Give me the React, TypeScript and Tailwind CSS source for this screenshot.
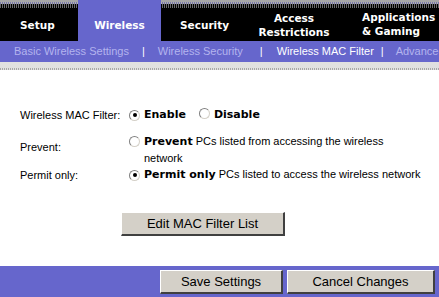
import React from "react";

const SANS = "font-['Liberation_Sans',Arial,sans-serif]";
const BOLD = "font-['DejaVu_Sans',Verdana,sans-serif] font-bold";

function Radio({ checked }: { checked?: boolean }) {
  return (
    <span className="relative inline-flex h-[11px] w-[11px] shrink-0 items-center justify-center rounded-full border border-t-[#808080] border-l-[#808080] border-r-[#d4d0c8] border-b-[#d4d0c8] bg-white">
      {checked && <span className="h-[4px] w-[4px] rounded-full bg-black" />}
    </span>
  );
}

function ClassicButton({ label, className }: { label: string; className: string }) {
  return (
    <button
      className={`${SANS} ${className} flex items-center justify-center border-t border-l border-t-white border-l-white border-r-2 border-b-2 border-r-[#404040] border-b-[#404040] bg-[#d4d0c8] text-[13px] text-black`}
    >
      {label}
    </button>
  );
}

function Tab({ children, className, active }: { children: React.ReactNode; className: string; active?: boolean }) {
  return (
    <div
      className={`${BOLD} ${className} flex flex-col justify-center text-[10.5px] leading-[14px] ${
        active ? "bg-[#6666cc] text-white" : "text-white"
      }`}
    >
      {children}
    </div>
  );
}

export default function App() {
  return (
    <div className="flex h-[297px] w-[439px] flex-col overflow-hidden bg-white">
      {/* top tabs */}
      <div className="relative flex h-[41px] shrink-0 bg-black">
        <div className="absolute left-0 top-0 h-[8px] w-full bg-[#a8a8a8]">
          <div className="mt-[2px] h-[2px] w-full bg-[repeating-linear-gradient(90deg,#7878a8_0_1px,#b0b0b0_1px_2px)]" />
          <div className="h-[4px] w-full bg-[repeating-linear-gradient(90deg,#6a6a6a_0_1px,#000_1px_2px)]" />
        </div>
        <Tab className="relative w-[78px] pl-[20px] pt-[9px]">Setup</Tab>
        <Tab className="relative w-[83px] items-center pt-[9px]" active>
          Wireless
        </Tab>
        <Tab className="relative w-[89px] pl-[19px] pt-[9px]">Security</Tab>
        <Tab className="relative w-[88px] items-center pt-[8px]">
          <span>Access</span>
          <span>Restrictions</span>
        </Tab>
        <Tab className="relative w-[101px] pl-[24px] pt-[6px]">
          <span>Applications</span>
          <span>&amp; Gaming</span>
        </Tab>
      </div>

      {/* sub nav */}
      <div
        className={`${SANS} flex h-[21px] shrink-0 items-center overflow-hidden whitespace-nowrap bg-[#6666cc] text-[11px] text-[#b4b4ee]`}
      >
        <span className="ml-[14px] shrink-0">Basic Wireless Settings</span>
        <span className="ml-[13px] shrink-0 text-white">|</span>
        <span className="ml-[13px] shrink-0">Wireless Security</span>
        <span className="ml-[17px] shrink-0 text-white">|</span>
        <span className="ml-[14px] shrink-0 text-white">Wireless MAC Filter</span>
        <span className="ml-[7px] shrink-0 text-white">|</span>
        <span className="ml-[12px] shrink-0">Advanced Wireless Settings</span>
      </div>
      <div className="h-[6px] shrink-0 bg-[#e0e0e0]" />
      <div className="h-[2px] shrink-0 bg-[repeating-linear-gradient(90deg,#a8a8a8_0_1px,#e0e0e0_1px_2px)]" />

      {/* content */}
      <div className={`${SANS} h-[196px] shrink-0 pt-[37px] text-[11px] text-black`}>
        <div className="flex h-[16px] items-center">
          <span className="w-[129px] pl-[20px]">Wireless MAC Filter:</span>
          <Radio checked />
          <span className={`${BOLD} ml-[4px]`}>Enable</span>
          <span className="ml-[13px]">
            <Radio />
          </span>
          <span className={`${BOLD} ml-[4px]`}>Disable</span>
        </div>

        <div className="mt-[10px] flex items-center">
          <span className="w-[129px] pb-[4px] pl-[20px]">Prevent:</span>
          <div className="flex items-start">
            <span className="mt-[2px]">
              <Radio />
            </span>
            <p className="ml-[4px] w-[270px] leading-[16px]">
              <span className={BOLD}>Prevent</span> PCs listed from accessing the wireless network
            </p>
          </div>
        </div>

        <div className="mt-[1px] flex h-[16px] items-center">
          <span className="w-[129px] pl-[20px]">Permit only:</span>
          <Radio checked />
          <span className="ml-[4px] whitespace-nowrap">
            <span className={BOLD}>Permit only</span> PCs listed to access the wireless network
          </span>
        </div>

        <div className="mt-[29px] flex">
          <ClassicButton label="Edit MAC Filter List" className="ml-[121px] h-[24px] w-[164px]" />
        </div>
      </div>

      {/* footer */}
      <div className="flex h-[31px] shrink-0 items-start gap-[4px] bg-[#6666cc] pl-[160px] pt-[4px]">
        <ClassicButton label="Save Settings" className="h-[24px] w-[123px]" />
        <ClassicButton label="Cancel Changes" className="h-[24px] w-[148px]" />
      </div>
    </div>
  );
}
